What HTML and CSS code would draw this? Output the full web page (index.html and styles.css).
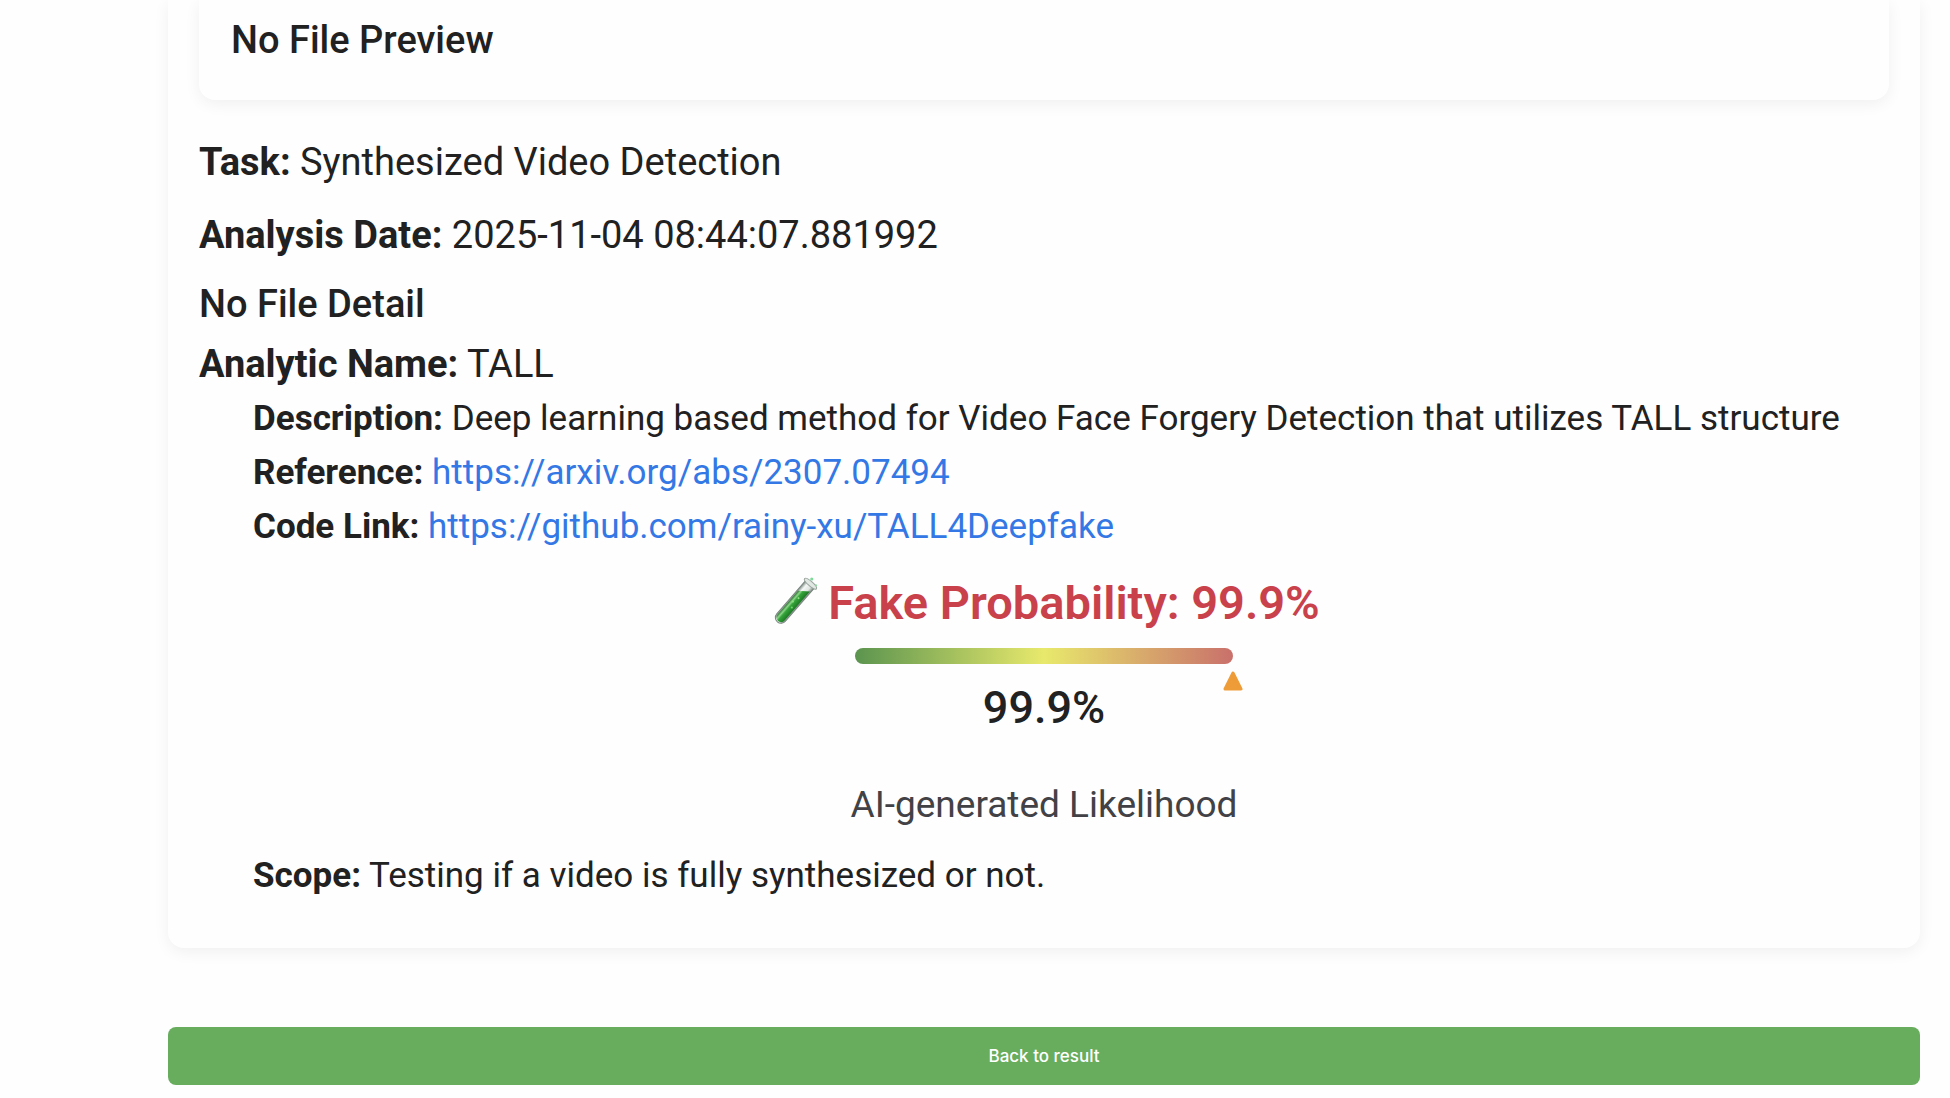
FILE: index.html
```html
<!DOCTYPE html>
<html lang="en">
<head>
  <meta charset="UTF-8">
  <meta name="viewport" content="width=device-width, initial-scale=1.0">
  <title>Analysis Result</title>
  <link rel="stylesheet" href="styles.css">
</head>
<body>
  <main class="page">
    <section class="result-card">
      <div class="preview-card">
        <h3>No File Preview</h3>
      </div>

      <p class="info"><strong>Task:</strong> Synthesized Video Detection</p>
      <p class="info"><strong>Analysis Date:</strong> 2025-11-04 08:44:07.881992</p>
      <h3 class="no-detail">No File Detail</h3>

      <div class="analytic-name"><strong>Analytic Name:</strong> TALL</div>
      <div class="analytic">
        <div><strong>Description:</strong> Deep learning based method for Video Face Forgery Detection that utilizes TALL structure</div>
        <div><strong>Reference:</strong> <a href="https://arxiv.org/abs/2307.07494">https://arxiv.org/abs/2307.07494</a></div>
        <div><strong>Code Link:</strong> <a href="https://github.com/rainy-xu/TALL4Deepfake">https://github.com/rainy-xu/TALL4Deepfake</a></div>
      </div>

      <div class="probability">
        <h2>
          <svg class="tube" viewBox="0 0 48 48" aria-hidden="true">
            <defs>
              <linearGradient id="glass" x1="0" y1="0" x2="1" y2="0">
                <stop offset="0" stop-color="#7d8a82"/>
                <stop offset="0.3" stop-color="#f4f7f5"/>
                <stop offset="0.7" stop-color="#dfe5e1"/>
                <stop offset="1" stop-color="#7c8780"/>
              </linearGradient>
              <linearGradient id="liquid" x1="0" y1="0" x2="1" y2="0">
                <stop offset="0" stop-color="#2c7d31"/>
                <stop offset="0.25" stop-color="#8fd58c"/>
                <stop offset="0.45" stop-color="#35a53a"/>
                <stop offset="1" stop-color="#1d7a25"/>
              </linearGradient>
            </defs>
            <g transform="rotate(41 24 24)">
              <path d="M19 -1h11v43a5.500 5.500 0 0 1-11 0z" fill="url(#glass)" stroke="#7b8780"/>
              <path d="M20 12l9-7v37a4.500 4.500 0 0 1-9 0z" fill="url(#liquid)"/>
              <ellipse cx="24.500" cy="-1" rx="7.500" ry="2.200" fill="#e1e7e3" stroke="#98a39c"/>
              <circle cx="25" cy="17" r="1" fill="#8ade80"/>
              <circle cx="23" cy="23" r="1" fill="#8ade80"/>
              <circle cx="26" cy="28" r="1" fill="#73cd6b"/>
            </g>
            <circle cx="42" cy="1" r="1.500" fill="#7cdb96"/>
            <circle cx="46" cy="7" r="1" fill="#7cdb96"/>
          </svg>
          Fake Probability: 99.9%
        </h2>
        <div class="meter">
          <svg class="marker" style="left: 99.9%" viewBox="0 0 20 20" aria-hidden="true">
            <path d="M10 2L18 18H2z" fill="#ee9c38" stroke="#ee9c38" stroke-width="3" stroke-linejoin="round"/>
          </svg>
        </div>
        <div class="percent">99.9%</div>
        <div class="caption">AI-generated Likelihood</div>
      </div>

      <div class="analytic"><strong>Scope:</strong> Testing if a video is fully synthesized or not.</div>
    </section>

    <button class="back" type="button">Back to result</button>
  </main>
</body>
</html>
```
FILE: styles.css
```css
* {
  box-sizing: border-box;
}
body {
  margin: 0;
  background: #fefefe;
  color: #212121;
  font-family: Roboto, "Liberation Sans", sans-serif;
  font-size: 35px;
  line-height: 54px;
}
h2, h3, p {
  margin: 0;
}
h3 {
  font-size: 38px;
  font-weight: 500;
  line-height: 48px;
}
strong {
  font-weight: 700;
}
a {
  color: #3478e5;
  text-decoration: none;
}
.page {
  padding: 0 30px 12px 168px;
}
.result-card {
  padding: 0 31px 45px;
  border-radius: 0 0 16px 16px;
  box-shadow: 0 4px 16px rgba(0, 0, 0, 0.06);
}
.preview-card {
  margin-bottom: 34px;
  padding: 16px 32px 36px;
  border-radius: 0 0 16px 16px;
  box-shadow: 0 4px 16px rgba(0, 0, 0, 0.06);
}
.info {
  margin-bottom: 16px;
  font-size: 38px;
  line-height: 57px;
}
.no-detail {
  margin-bottom: 8px;
}
.analytic-name {
  font-size: 38px;
  line-height: 56px;
}
.analytic {
  padding-left: 54px;
}
.probability {
  display: flex;
  flex-direction: column;
  align-items: center;
  margin-top: 17px;
}
.probability h2 {
  display: flex;
  align-items: center;
  gap: 10px;
  color: #c9414b;
  font-size: 47px;
  font-weight: 600;
  line-height: 64px;
}
.tube {
  width: 50px;
  height: 50px;
  overflow: visible;
}
.meter {
  position: relative;
  width: 378px;
  height: 16px;
  margin-top: 13px;
  border-radius: 8px;
  background: linear-gradient(to right, #5b944f, #e8e96c 50%, #c9706b);
}
.marker {
  position: absolute;
  top: 23px;
  width: 20px;
  height: 20px;
  transform: translateX(-50%);
}
.percent {
  margin-top: 16px;
  font-size: 45px;
  font-weight: 500;
  line-height: 56px;
}
.caption {
  margin: 42px 0 17px;
  color: #424246;
  font-size: 37px;
}
.back {
  display: block;
  width: 100%;
  margin-top: 79px;
  padding: 16px;
  border: none;
  border-radius: 8px;
  background: #67ad5d;
  color: white;
  font-family: Inter, sans-serif;
  font-size: 17px;
  font-weight: 500;
  line-height: 26px;
  cursor: pointer;
}
.back:hover {
  background: #589b4f;
}
```
